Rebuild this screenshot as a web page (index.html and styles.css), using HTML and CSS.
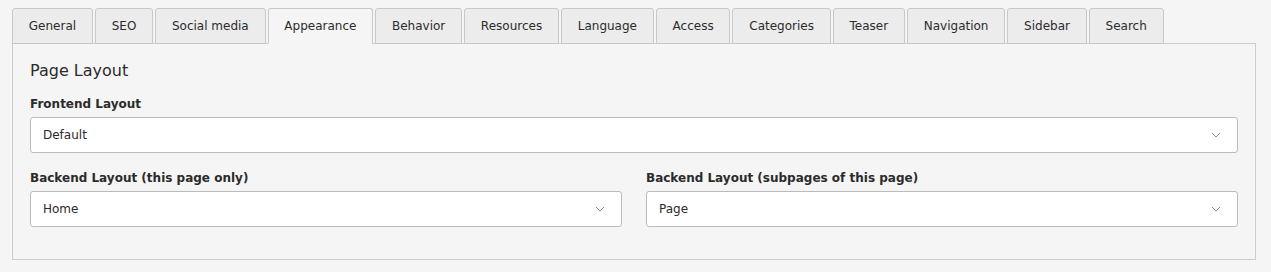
FILE: index.html
```html
<!DOCTYPE html>
<html lang="en">
<head>
    <meta charset="UTF-8">
    <meta name="viewport" content="width=device-width, initial-scale=1.0">
    <title>Page properties</title>
    <link rel="stylesheet" href="styles.css">
</head>
<body>
    <ul class="tabs">
        <li class="tab">General</li>
        <li class="tab">SEO</li>
        <li class="tab">Social media</li>
        <li class="tab active">Appearance</li>
        <li class="tab">Behavior</li>
        <li class="tab">Resources</li>
        <li class="tab">Language</li>
        <li class="tab">Access</li>
        <li class="tab">Categories</li>
        <li class="tab">Teaser</li>
        <li class="tab">Navigation</li>
        <li class="tab">Sidebar</li>
        <li class="tab">Search</li>
    </ul>

    <div class="panel">
        <h3 class="panel-title">Page Layout</h3>

        <div class="field">
            <label class="field-label">Frontend Layout</label>
            <div class="select">
                <span>Default</span>
                <svg class="chevron" width="10" height="6" viewBox="0 0 10 6"><polyline points="1,1 5,5 9,1" fill="none" stroke="#8a8a8a" stroke-width="1"/></svg>
            </div>
        </div>

        <div class="row">
            <div class="field">
                <label class="field-label">Backend Layout (this page only)</label>
                <div class="select">
                    <span>Home</span>
                    <svg class="chevron" width="10" height="6" viewBox="0 0 10 6"><polyline points="1,1 5,5 9,1" fill="none" stroke="#8a8a8a" stroke-width="1"/></svg>
                </div>
            </div>
            <div class="field">
                <label class="field-label">Backend Layout (subpages of this page)</label>
                <div class="select">
                    <span>Page</span>
                    <svg class="chevron" width="10" height="6" viewBox="0 0 10 6"><polyline points="1,1 5,5 9,1" fill="none" stroke="#8a8a8a" stroke-width="1"/></svg>
                </div>
            </div>
        </div>
    </div>
</body>
</html>
```

FILE: styles.css
```css
body {
    margin: 0;
    padding: 8px 15px 0 12px;
    background-color: #f5f5f5;
    font-family: "DejaVu Sans", Verdana, sans-serif;
    font-size: 12px;
    color: #2b2b2b;
}
.tabs {
    display: flex;
    gap: 2px;
    list-style: none;
    margin: 0 0 -1px 0;
    padding: 0;
    position: relative;
}
.tab {
    height: 34px;
    line-height: 34px;
    padding: 0 15.8px;
    background-color: #ececec;
    border: 1px solid #c8c8c8;
    border-radius: 3px 3px 0 0;
}
.tab.active {
    background-color: #f5f5f5;
    border-bottom-color: #f5f5f5;
}
.panel {
    background-color: #f5f5f5;
    border: 1px solid #cdcdcd;
    padding: 17px 17px 32px 17px;
}
.panel-title {
    font-size: 16px;
    font-weight: normal;
    margin: 0 0 16px 0;
    line-height: 20px;
}
.field {
    margin-bottom: 18px;
    flex: 1;
}
.field-label {
    display: block;
    font-weight: bold;
    line-height: 15px;
    margin-bottom: 5px;
}
.select {
    display: flex;
    align-items: center;
    justify-content: space-between;
    height: 34px;
    padding: 0 12px;
    background-color: #fff;
    border: 1px solid #bbb;
    border-radius: 3px;
}
.chevron {
    margin-right: 4px;
}
.row {
    display: flex;
    gap: 24px;
}
.row .field {
    margin-bottom: 0;
}
```
